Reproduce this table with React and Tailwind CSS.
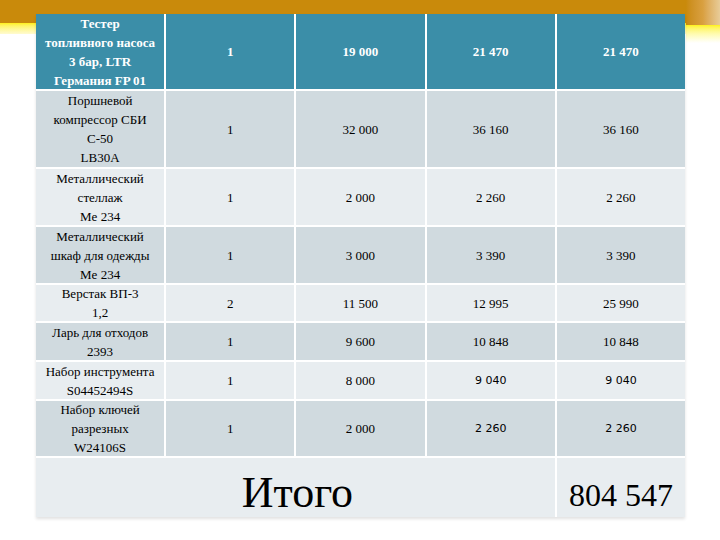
import React from "react";

const rows = [
  { name: ["Поршневой", "компрессор СБИ", "С-50", "LB30A"], qty: "1", price: "32 000", vat: "36 160", sum: "36 160", h: "dark" },
  { name: ["Металлический", "стеллаж", "Me 234"], qty: "1", price: "2 000", vat: "2 260", sum: "2 260", h: "light" },
  { name: ["Металлический", "шкаф для одежды", "Me 234"], qty: "1", price: "3 000", vat: "3 390", sum: "3 390", h: "dark" },
  { name: ["Верстак ВП-3", "1,2"], qty: "2", price: "11 500", vat: "12 995", sum: "25 990", h: "light" },
  { name: ["Ларь для отходов", "2393"], qty: "1", price: "9 600", vat: "10 848", sum: "10 848", h: "dark" },
  { name: ["Набор инструмента", "S04452494S"], qty: "1", price: "8 000", vat: "9 040", sum: "9 040", h: "light", sans: true },
  { name: ["Набор ключей", "разрезных", "W24106S"], qty: "1", price: "2 000", vat: "2 260", sum: "2 260", h: "dark", sans: true },
];

const serif = "font-['Liberation_Serif','Times_New_Roman',serif]";

function Cell({ children, bg, className = "" }) {
  return (
    <div className={`flex flex-col items-center justify-center text-center leading-[19px] ${bg} ${className}`}>
      {children}
    </div>
  );
}

export default function App() {
  return (
    <div className={`w-[720px] h-[540px] bg-white overflow-hidden ${serif}`}>
      {/* decorative top bar */}
      <div className="flex">
        <div className="w-[686px]">
          <div className="h-[23px] bg-[#c98a0b]" />
          <div className="h-[11px] bg-gradient-to-b from-[#fff000] to-[#fffbd0]" />
        </div>
        <div className="flex-1">
          <div className="h-[25px] bg-gradient-to-r from-[#c98a0b] via-[#d9a040] to-[#e8cc98]" />
          <div className="h-[18px] bg-gradient-to-b from-[#fff200] via-[#fffbb0] to-white" />
        </div>
      </div>

      <div className="relative -mt-[29px] px-[36px]">
        <div className="w-[649px] grid grid-cols-5 gap-[2px] bg-white grid-rows-[75px_76px_56px_56px_36px_37px_37px_55px_59px] text-[13px] text-black shadow-[0_2px_3px_rgba(0,0,0,0.12)]">
          <Cell bg="bg-[#3b8ea8]" className="text-white font-bold">
            <span>Тестер</span>
            <span>топливного насоса</span>
            <span>3 бар, LTR</span>
            <span>Германия FP 01</span>
          </Cell>
          <Cell bg="bg-[#3b8ea8]" className="text-white font-bold">1</Cell>
          <Cell bg="bg-[#3b8ea8]" className="text-white font-bold">19 000</Cell>
          <Cell bg="bg-[#3b8ea8]" className="text-white font-bold">21 470</Cell>
          <Cell bg="bg-[#3b8ea8]" className="text-white font-bold">21 470</Cell>

          {rows.map((r, i) => {
            const bg = r.h === "dark" ? "bg-[#d0dadf]" : "bg-[#e8edf0]";
            const numFont = r.sans ? "font-['DejaVu_Sans',sans-serif] text-[11px]" : "";
            return (
              <React.Fragment key={i}>
                <Cell bg={bg}>
                  {r.name.map((l, j) => (
                    <span key={j}>{l}</span>
                  ))}
                </Cell>
                <Cell bg={bg}>{r.qty}</Cell>
                <Cell bg={bg}>{r.price}</Cell>
                <Cell bg={bg} className={numFont}>{r.vat}</Cell>
                <Cell bg={bg} className={numFont}>{r.sum}</Cell>
              </React.Fragment>
            );
          })}

          <div className="col-span-4 flex items-end justify-center bg-[#e8edf0] pb-[2px]">
            <span className="text-[44px] leading-none pl-[4px]">Итого</span>
          </div>
          <div className="flex items-end justify-center bg-[#e8edf0] pb-[6px]">
            <span className="text-[32px] leading-none">804 547</span>
          </div>
        </div>
      </div>
    </div>
  );
}
